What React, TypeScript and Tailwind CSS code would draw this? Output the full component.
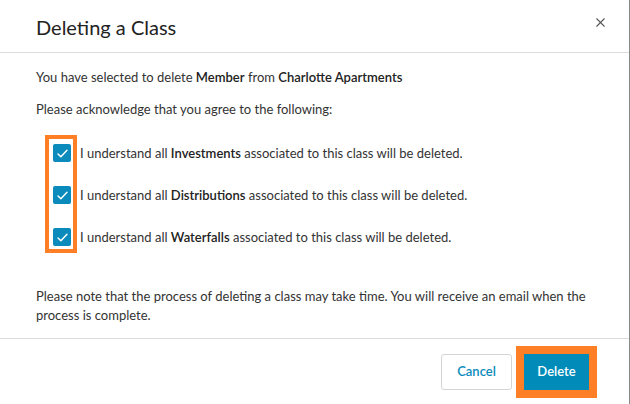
import { X } from 'lucide-react'

const items = ['Investments', 'Distributions', 'Waterfalls']

function CheckBox() {
    return (
        <span className="flex h-[18px] w-[18px] shrink-0 items-center justify-center rounded-[2px] bg-[#0a8bbb]">
            <svg viewBox="0 0 16 16" className="h-[13px] w-[13px]" fill="none" stroke="white" strokeWidth="1.8" strokeLinecap="round" strokeLinejoin="round">
                <path d="M2.5 8.5 L6 12 L13.5 4" />
            </svg>
        </span>
    )
}

export default function App() {
    return (
        <div className="flex h-[404px] w-[630px] flex-col border-r border-[#8a8a8a] bg-white text-[#333] font-['Lato','Open_Sans',sans-serif]">
            <div className="flex h-[53px] shrink-0 items-center justify-between border-b border-[#dcdcdc] pl-9 pr-[21px]">
                <h2 className="text-[20px] text-[#222] pt-[1px]">Deleting a Class</h2>
                <X className="h-[15px] w-[15px] text-[#555] -mt-[7px]" strokeWidth={1.7} />
            </div>

            <div className="flex-1 px-9 pt-[14px] text-[13px] leading-5">
                <p>
                    You have selected to delete <b className="font-semibold text-[#222]">Member</b> from{' '}
                    <b className="font-semibold text-[#222]">Charlotte Apartments</b>
                </p>
                <p className="mt-[12px]">Please acknowledge that you agree to the following:</p>

                <div className="relative mt-[24px] flex flex-col gap-[22px] pl-[17px]">
                    <div className="pointer-events-none absolute left-[9px] top-[-8px] h-[118px] w-[32px] border-4 border-[#ff7f27]" />
                    {items.map((item) => (
                        <label key={item} className="flex items-center gap-[9px]">
                            <CheckBox />
                            <span>
                                I understand all <b className="font-semibold text-[#222]">{item}</b> associated to this class will be deleted.
                            </span>
                        </label>
                    ))}
                </div>

                <p className="mt-[40px] leading-[19px]">
                    Please note that the process of deleting a class may take time. You will receive an email when the
                    process is complete.
                </p>
            </div>

            <div className="flex h-[66px] shrink-0 items-center justify-end gap-3 border-t border-[#dcdcdc] pr-10">
                <button className="h-9 w-[71px] rounded-[3px] border border-[#d4d4d4] bg-white text-[13px] font-semibold text-[#0a8bbb]">
                    Cancel
                </button>
                <button className="h-9 w-[65px] bg-[#008bb9] text-[13px] font-semibold text-white ring-8 ring-[#ff7f27]">
                    Delete
                </button>
            </div>
        </div>
    )
}
